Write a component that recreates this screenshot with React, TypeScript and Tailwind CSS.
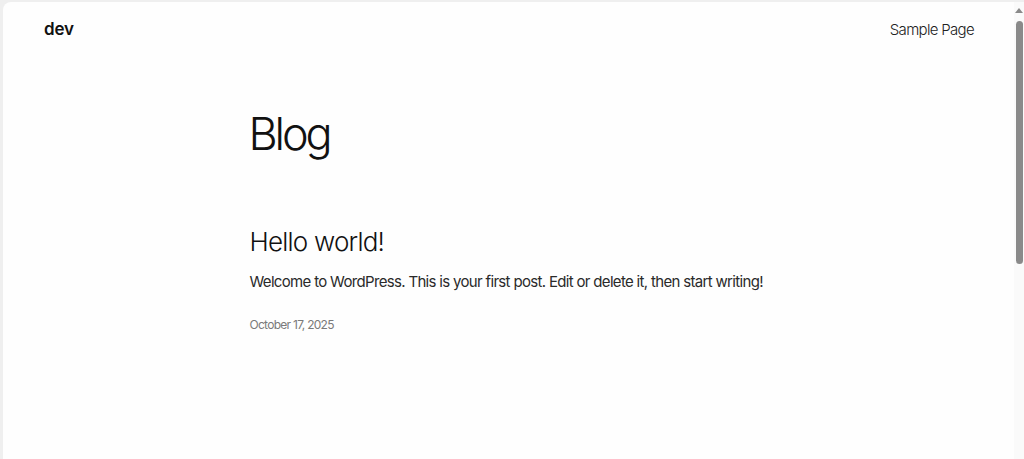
export default function App() {
  return (
    <div className="flex h-[459px] w-[1024px] overflow-hidden bg-[#efefef] pt-[2px] font-['Inter',sans-serif] text-[#111111]">
      <div className="ml-[3px] flex flex-1 flex-col rounded-tl-[8px] bg-[#fefefe]">
        <header className="flex h-[56px] items-center justify-between pl-[41px] pr-[40px]">
          <a className="-mt-[1px] text-[17px] font-semibold tracking-[-0.01em] text-[#111111]" href="#">
            dev
          </a>
          <nav className="-mt-[2px]">
            <a className="text-[15px] font-light tracking-[-0.045em] text-[#222222]" href="#">
              Sample Page
            </a>
          </nav>
        </header>
        <main className="mx-auto w-[516px] pt-[49px]">
          <h1 className="-ml-[2px] text-[45px] font-light leading-[1.2] tracking-[-0.07em]">Blog</h1>
          <article className="mt-[65px] -ml-[1px]">
            <h2 className="text-[26px] font-light leading-[1.2] tracking-[-0.03em]">
              <a href="#">Hello world!</a>
            </h2>
            <p className="mt-[14px] text-[15px] leading-[1.5] tracking-[-0.045em] text-[#2a2a2a]">
              Welcome to WordPress. This is your first post. Edit or delete it, then start writing!
            </p>
            <time className="mt-[22px] block text-[12px] leading-[1.5] tracking-[-0.06em] text-[#7a7a7a]">
              October 17, 2025
            </time>
          </article>
        </main>
      </div>
      <div className="flex w-[10px] flex-col items-center bg-[#fafafa] pt-[6px]">
        <div className="h-0 w-0 border-x-[4px] border-b-[5px] border-x-transparent border-b-[#8a8a8a]" />
        <div className="mt-[8px] h-[243px] w-[7px] rounded-full bg-[#8a8a8a]" />
      </div>
    </div>
  );
}
